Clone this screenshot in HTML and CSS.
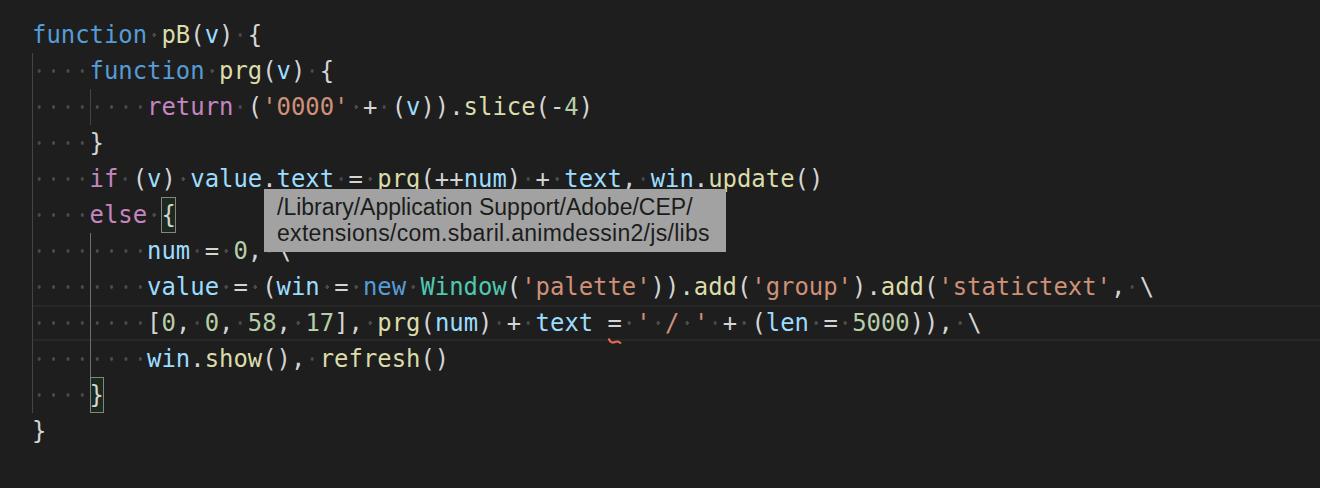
FILE: index.html
```html
<!DOCTYPE html>
<html lang="en">
<head>
<meta charset="utf-8">
<title>Editor</title>
<link rel="stylesheet" href="styles.css">
</head>
<body>
<div class="editor">
  <div class="line"><span class="k">function</span><span class="w"> </span><span class="f">pB</span>(<span class="v">v</span>)<span class="w"> </span>{</div>
  <div class="line"><span class="ig">    </span><span class="k">function</span><span class="w"> </span><span class="f">prg</span>(<span class="v">v</span>)<span class="w"> </span>{</div>
  <div class="line"><span class="ig">    </span><span class="ig">    </span><span class="c">return</span><span class="w"> </span>(<span class="s">'0000'</span><span class="w"> </span>+<span class="w"> </span>(<span class="v">v</span>)).<span class="f">slice</span>(-<span class="n">4</span>)</div>
  <div class="line"><span class="ig">    </span>}</div>
  <div class="line"><span class="ig">    </span><span class="c">if</span><span class="w"> </span>(<span class="v">v</span>)<span class="w"> </span><span class="v">value</span>.<span class="v">text</span><span class="w"> </span>=<span class="w"> </span><span class="f">prg</span>(++<span class="v">num</span>)<span class="w"> </span>+<span class="w"> </span><span class="v">text</span>,<span class="w"> </span><span class="v">win</span>.<span class="f">update</span>()</div>
  <div class="line"><span class="ig">    </span><span class="c">else</span><span class="w"> </span><span class="bm">{</span></div>
  <div class="line"><span class="ig">    </span><span class="ig active">    </span><span class="v">num</span><span class="w"> </span>=<span class="w"> </span><span class="n">0</span>,<span class="w"> </span>\</div>
  <div class="line"><span class="ig">    </span><span class="ig active">    </span><span class="v">value</span><span class="w"> </span>=<span class="w"> </span>(<span class="v">win</span><span class="w"> </span>=<span class="w"> </span><span class="k">new</span><span class="w"> </span><span class="t">Window</span>(<span class="s">'palette'</span>)).<span class="f">add</span>(<span class="s">'group'</span>).<span class="f">add</span>(<span class="s">'statictext'</span>,<span class="w"> </span>\</div>
  <div class="line cur"><span class="ig">    </span><span class="ig active">    </span>[<span class="n">0</span>,<span class="w"> </span><span class="n">0</span>,<span class="w"> </span><span class="n">58</span>,<span class="w"> </span><span class="n">17</span>],<span class="w"> </span><span class="f">prg</span>(<span class="v">num</span>)<span class="w"> </span>+<span class="w"> </span><span class="v">text</span> <span class="err">=<svg class="squiggle" width="16" height="8" viewBox="0 0 16 8"><path d="M1.5 1.5 Q4 7 8 5 Q11 3.5 14 6.5" fill="none" stroke="#ec6a4f" stroke-width="2"/></svg></span><span class="w"> </span><span class="s">'<span class="w"> </span>/<span class="w"> </span>'</span><span class="w"> </span>+<span class="w"> </span>(<span class="v">len</span><span class="w"> </span>=<span class="w"> </span><span class="n">5000</span>)),<span class="w"> </span>\</div>
  <div class="line"><span class="ig">    </span><span class="ig active">    </span><span class="v">win</span>.<span class="f">show</span>(),<span class="w"> </span><span class="f">refresh</span>()</div>
  <div class="line"><span class="ig">    </span><span class="bm">}</span></div>
  <div class="line">}</div>

  <div class="tooltip">/Library/Application Support/Adobe/CEP/<br><span class="tip-wide">extensions/com.sbaril.animdessin2/js/libs</span></div>
</div>
</body>
</html>
```

FILE: styles.css
```css
html, body {
  margin: 0;
  padding: 0;
  background: #1e1e1e;
}

body {
  width: 1320px;
  height: 488px;
  overflow: hidden;
}

.editor {
  position: relative;
  padding: 17px 0 0 32px;
  font-family: "DejaVu Sans Mono", "Liberation Mono", monospace;
  font-size: 23.9px;
  line-height: 36px;
  color: #d4d4d4;
}

.line {
  height: 36px;
  white-space: pre;
}

.line.cur {
  box-shadow: inset 0 2px 0 #282828, inset 0 -2px 0 #282828;
}

.k { color: #569cd6; }
.c { color: #c586c0; }
.f { color: #dcdcaa; }
.v { color: #9cdcfe; }
.s { color: #ce9178; }
.n { color: #b5cea8; }
.t { color: #4ec9b0; }

.w {
  background-image: radial-gradient(circle, #4b4b4b 1.6px, rgba(75, 75, 75, 0) 1.9px);
  background-size: 1ch 100%;
  background-repeat: repeat-x;
  background-position: 0 50%;
}

.ig {
  display: inline-block;
  height: 36px;
  vertical-align: top;
  background-image:
    linear-gradient(#444444, #444444),
    radial-gradient(circle, #4b4b4b 1.6px, rgba(75, 75, 75, 0) 1.9px);
  background-size: 1px 100%, 1ch 100%;
  background-repeat: no-repeat, repeat-x;
  background-position: 0 0, 0 50%;
}

.ig.active {
  background-image:
    linear-gradient(#6e6e6e, #6e6e6e),
    radial-gradient(circle, #4b4b4b 1.6px, rgba(75, 75, 75, 0) 1.9px);
}

.bm {
  display: inline-block;
  height: 36px;
  vertical-align: top;
  background: #1b2a1c;
  outline: 1px solid #858585;
  outline-offset: -1px;
}

.err {
  position: relative;
}

.squiggle {
  position: absolute;
  left: -1px;
  top: 100%;
}

.tooltip {
  position: absolute;
  left: 264px;
  top: 189px;
  box-sizing: border-box;
  width: 462px;
  height: 63px;
  padding: 5px 0 0 13px;
  background: #a2a2a2;
  color: #1c1c1c;
  font-family: "Liberation Sans", Arial, sans-serif;
  font-size: 23px;
  line-height: 26px;
  white-space: nowrap;
}

.tip-wide {
  letter-spacing: 0.3px;
}
```
